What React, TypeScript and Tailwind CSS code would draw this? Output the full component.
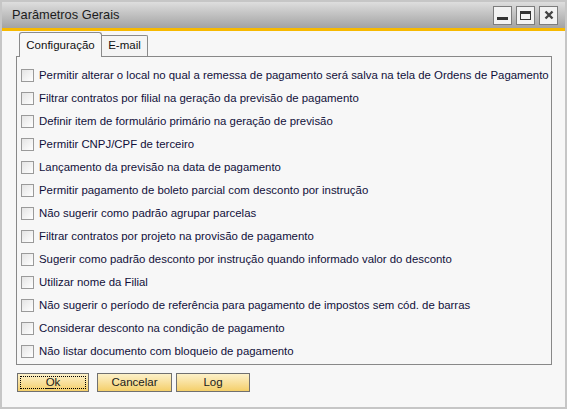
import React from 'react'

const font = { fontFamily: '"Liberation Sans", Arial, sans-serif' }

const options = [
  'Permitir alterar o local no qual a remessa de pagamento será salva na tela de Ordens de Pagamento',
  'Filtrar contratos por filial na geração da previsão de pagamento',
  'Definir item de formulário primário na geração de previsão',
  'Permitir CNPJ/CPF de terceiro',
  'Lançamento da previsão na data de pagamento',
  'Permitir pagamento de boleto parcial com desconto por instrução',
  'Não sugerir como padrão agrupar parcelas',
  'Filtrar contratos por projeto na provisão de pagamento',
  'Sugerir como padrão desconto por instrução quando informado valor do desconto',
  'Utilizar nome da Filial',
  'Não sugerir o período de referência para pagamento de impostos sem cód. de barras',
  'Considerar desconto na condição de pagamento',
  'Não listar documento com bloqueio de pagamento',
]

function TitleButton({ children }: { children: React.ReactNode }) {
  return (
    <div className="flex h-[19px] w-[19px] items-center justify-center border border-[#7c7c7c] bg-[#f2f2f2]">
      {children}
    </div>
  )
}

function Checkbox() {
  return (
    <div className="h-[13px] w-[13px] shrink-0 border border-[#9a9a9a] bg-gradient-to-br from-[#e4e4e4] to-white" />
  )
}

function Button({
  children,
  className,
  focused = false,
}: {
  children: React.ReactNode
  className?: string
  focused?: boolean
}) {
  return (
    <button
      className={`flex h-[19px] items-center justify-center border border-[#707070] bg-gradient-to-b from-[#fdf1c9] to-[#f4cf68] p-[2px] text-[11.5px] text-[#1a1a1a] ${className || ''}`}
    >
      <span
        className={`flex h-full w-full items-center justify-center ${focused ? 'border border-dotted border-black' : ''}`}
      >
        {children}
      </span>
    </button>
  )
}

export default function App() {
  return (
    <div
      className="flex h-[409px] w-[567px] flex-col border-2 border-[#c6c6c6] bg-[#f7f7f7]"
      style={font}
    >
      <div className="flex h-[26px] shrink-0 items-center justify-between bg-gradient-to-b from-[#dedede] to-[#a3a3a3] pl-[10px] pr-[7px]">
        <span className="text-[12.8px] text-[#1c1c1c]">Parâmetros Gerais</span>
        <div className="flex gap-[4px]">
          <TitleButton>
            <div className="mt-[6px] h-[3px] w-[11px] bg-[#333]" />
          </TitleButton>
          <TitleButton>
            <div className="h-[9px] w-[11px] border border-t-[3px] border-[#333]" />
          </TitleButton>
          <TitleButton>
            <svg width="10" height="10" viewBox="0 0 10 10">
              <path d="M1.5 1.5 L8.5 8.5 M8.5 1.5 L1.5 8.5" stroke="#444" strokeWidth="2.4" />
            </svg>
          </TitleButton>
        </div>
      </div>
      <div className="h-[3px] shrink-0 bg-[#f7b900]" />

      <div className="flex flex-col pl-[14px] pr-[13px] pt-[1px]">
        <div className="flex items-end pl-[3px]">
          <div className="relative z-10 -mb-px flex h-[25px] w-[83px] items-center justify-center rounded-t-[3px] border border-b-0 border-[#8a8a8a] bg-[#f7f7f7] pt-px text-[11.5px] text-[#111]">
            Configuração
          </div>
          <div className="flex h-[21px] w-[46px] items-center justify-center rounded-tr-[2px] border border-b-0 border-l-0 border-[#8a8a8a] bg-[#f4f4f4] text-[11.5px] text-[#111]">
            E-mail
          </div>
        </div>
        <div className="flex h-[309px] flex-col border border-[#888] pl-[4px] pt-[7px]">
          {options.map((label) => (
            <div key={label} className="flex h-[23px] items-center gap-[5px]">
              <Checkbox />
              <span className="whitespace-nowrap text-[11.4px] text-[#10103a]">{label}</span>
            </div>
          ))}
        </div>
        <div className="mt-[8px] flex pl-px">
          <Button className="w-[72px]" focused>
            <span className="underline underline-offset-2">O</span>k
          </Button>
          <Button className="ml-[8px] w-[75px]">Cancelar</Button>
          <Button className="ml-[4px] w-[74px]">Log</Button>
        </div>
      </div>
    </div>
  )
}
